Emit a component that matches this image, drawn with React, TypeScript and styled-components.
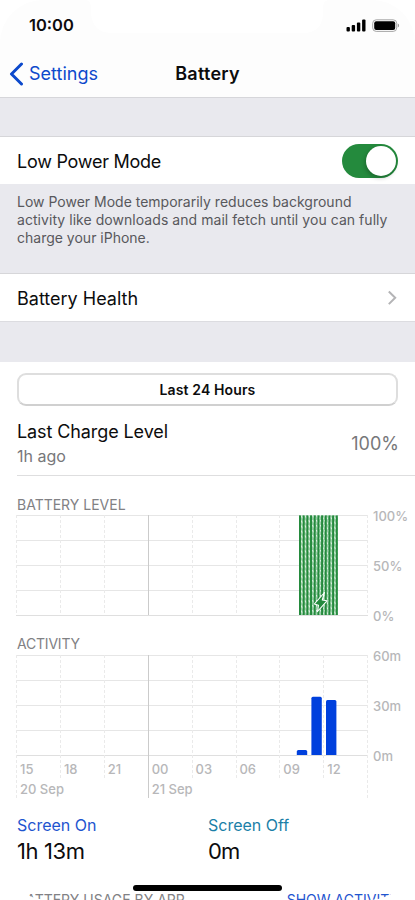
import React from "react";
import styled, { createGlobalStyle } from "styled-components";

const Global = createGlobalStyle`
  html, body { margin: 0; padding: 0; background: #fff; overflow: hidden; }
  * { box-sizing: border-box; }
`;

const Screen = styled.main`
  position: relative;
  width: 415px;
  height: 900px;
  overflow: hidden;
  display: flex;
  flex-direction: column;
  background: #fff;
  color: #0c0c0d;
  font-family: Inter, "Liberation Sans", sans-serif;
`;

const Text = styled.span<{ $size: number; $track?: number; $weight?: number; $color?: string; $line?: number }>`
  display: block;
  white-space: nowrap;
  font-size: ${(p) => p.$size}px;
  letter-spacing: ${(p) => p.$track ?? 0}px;
  font-weight: ${(p) => p.$weight ?? 400};
  color: ${(p) => p.$color ?? "inherit"};
  line-height: ${(p) => p.$line ?? 20}px;
`;

const Header = styled.header`
  flex: none;
  height: 98px;
  background: #fdfdfd;
  border-bottom: 1px solid #d6d6da;
`;

const StatusBar = styled.div`
  height: 50px;
  display: flex;
  justify-content: space-between;
  padding: 15px 15px 0 29px;
`;

const StatusIcons = styled.svg`
  display: block;
  width: 54px;
  height: 16px;
  margin-top: 3px;
`;

const NavBar = styled.nav`
  height: 47px;
  display: grid;
  grid-template-columns: 1fr auto 1fr;
  align-items: center;
`;

const Back = styled.div`
  display: flex;
  align-items: center;
  gap: 5px;
  padding-left: 9px;
  color: #0c49cc;
`;

const Gap = styled.div<{ $height: number }>`
  flex: none;
  height: ${(p) => p.$height}px;
  background: #e9e9ee;
`;

const Row = styled.section<{ $height: number; $bottom?: boolean }>`
  flex: none;
  height: ${(p) => p.$height}px;
  display: flex;
  align-items: center;
  justify-content: space-between;
  padding: 0 17px;
  border-top: 1px solid #d6d6d9;
  border-bottom: ${(p) => (p.$bottom ? "1px solid #dcdce0" : "none")};
`;

const RowLabel = styled(Text)`
  padding-top: 2px;
`;

const Switch = styled.div`
  width: 56px;
  height: 34px;
  border-radius: 17px;
  padding: 2px;
  display: flex;
  justify-content: flex-end;
  background: #248a3d;
`;

const Knob = styled.div`
  width: 30px;
  height: 30px;
  border-radius: 50%;
  background: #fff;
  box-shadow: -1px 2px 4px rgba(0, 0, 0, 0.25);
`;

const Note = styled.div`
  flex: none;
  height: 89px;
  padding: 9px 17px 0;
  background: #e9e9ee;
`;

const Segment = styled.div`
  flex: none;
  height: 33px;
  margin: 11px 17px 0;
  border: 2px solid #dedede;
  border-bottom-color: #d0d0d0;
  border-radius: 9px;
  display: flex;
  align-items: center;
  justify-content: center;
`;

const ChargeRow = styled.section`
  flex: none;
  height: 70px;
  margin-left: 17px;
  padding: 16px 16px 0 0;
  display: flex;
  justify-content: space-between;
  border-bottom: 1px solid #dededf;
`;

const Stack = styled.div<{ $gap: number }>`
  display: flex;
  flex-direction: column;
  gap: ${(p) => p.$gap}px;
`;

const ChartBlock = styled.section<{ $height: number; $top?: number }>`
  flex: none;
  height: ${(p) => p.$height}px;
  padding: ${(p) => p.$top ?? 0}px 0 0 16px;
`;

const ChartTitle = styled.div`
  height: 20px;
  padding-left: 1px;
`;

const ChartBody = styled.div`
  display: grid;
  grid-template-columns: 357px 1fr;
`;

const Plot = styled.svg`
  grid-area: 1 / 1;
  display: block;
  width: 352px;
`;

const Scale = styled.div`
  grid-area: 1 / 2;
  height: 120px;
  margin-top: -9px;
  display: flex;
  flex-direction: column;
  justify-content: space-between;
`;

const TimeAxis = styled.div`
  grid-area: 1 / 1;
  padding: 104px 0 0 4px;
`;

const Hours = styled.div`
  display: grid;
  grid-template-columns: repeat(8, 43.9px);
`;

const Dates = styled.div`
  display: grid;
  grid-template-columns: 131.7px auto;
`;

const AxisText = styled(Text).attrs({ $size: 13, $color: "#b7b7b9", $weight: 500 })``;

const Summary = styled.section`
  flex: none;
  height: 86px;
  padding: 11px 17px 0;
  display: grid;
  grid-template-columns: 191px auto;
`;

const Footer = styled.footer`
  flex: none;
  display: flex;
  justify-content: space-between;
  padding: 0 16px 0 17px;
`;

const Frame = styled.svg`
  position: absolute;
  inset: 0;
  pointer-events: none;
`;

const HomeBar = styled.div`
  position: absolute;
  left: 133px;
  bottom: 9px;
  width: 149px;
  height: 6px;
  border-radius: 3px;
  background: #000;
`;

const STEP = 43.9;

function GridLines({ tail = false }: { tail?: boolean }) {
  return (
    <>
      {[0, 25, 50, 75, 100].map((y) => (
        <path key={y} d={`M0 ${y + 0.5}H352`} stroke={y === 100 ? "#dfdfdf" : "#e6e6e6"} />
      ))}
      {Array.from({ length: 9 }, (_, i) => {
        const x = Math.round(i * STEP) + 0.5;
        const bottom = !tail ? 100 : i === 0 || i === 3 || i === 8 ? 143 : 124;
        return i === 3 ? (
          <path key={i} d={`M${x} 0V${bottom}`} stroke="#cbcbcb" />
        ) : (
          <path key={i} d={`M${x} 0V${bottom}`} stroke="#eaeaea" strokeDasharray="3 2" />
        );
      })}
    </>
  );
}

function AxisLabels({ labels }: { labels: string[] }) {
  return (
    <Scale>
      {labels.map((l) => (
        <AxisText key={l}>{l}</AxisText>
      ))}
    </Scale>
  );
}

const NOTE = [
  { text: "Low Power Mode temporarily reduces background", track: 0 },
  { text: "activity like downloads and mail fetch until you can fully", track: 0.05 },
  { text: "charge your iPhone.", track: 0 },
];

export default function App() {
  return (
    <>
      <Global />
      <Screen>
        <Header>
          <StatusBar>
            <Text $size={16.5} $weight={600}>10:00</Text>
            <StatusIcons viewBox="0 0 54 16">
              <rect x="0.5" y="9" width="3.4" height="4.5" rx="1" />
              <rect x="5.7" y="7" width="3.4" height="6.5" rx="1" />
              <rect x="10.9" y="4.4" width="3.4" height="9.1" rx="1" />
              <rect x="16.1" y="1.5" width="3.4" height="12" rx="1" />
              <rect x="26.7" y="1.8" width="24" height="11.6" rx="3.5" fill="none" stroke="#a6a6a6" />
              <rect x="28.2" y="3.3" width="21" height="8.6" rx="2" />
              <path d="M51.8 5.6v4c1.8-.7 1.8-3.3 0-4z" fill="#999" />
            </StatusIcons>
          </StatusBar>
          <NavBar>
            <Back>
              <svg width="15" height="24" viewBox="0 0 15 24" fill="none" stroke="currentColor" strokeWidth="3" strokeLinecap="round" strokeLinejoin="round">
                <path d="M12.5 2L2.5 12L12.5 22" />
              </svg>
              <Text $size={18}>Settings</Text>
            </Back>
            <Text $size={18} $weight={600} $track={0.25}>Battery</Text>
          </NavBar>
        </Header>
        <Gap $height={38} />
        <Row $height={48}>
          <RowLabel $size={18} $track={-0.25}>Low Power Mode</RowLabel>
          <Switch><Knob /></Switch>
        </Row>
        <Note>
          {NOTE.map((l) => (
            <Text key={l.text} $size={14} $line={17.8} $track={l.track} $color="#58585c">{l.text}</Text>
          ))}
        </Note>
        <Row $height={49} $bottom>
          <RowLabel $size={18}>Battery Health</RowLabel>
          <svg width="12" height="16" viewBox="0 0 12 16" fill="none" stroke="#b4b4b6" strokeWidth="2">
            <path d="M2.8 1.5L9.2 7.8L2.8 14.1" />
          </svg>
        </Row>
        <Gap $height={40} />
        <Segment>
          <Text $size={14} $weight={600} $track={0.12}>Last 24 Hours</Text>
        </Segment>
        <ChargeRow>
          <Stack $gap={4}>
            <Text $size={18} $track={-0.1}>Last Charge Level</Text>
            <Text $size={16} $color="#77777a">1h ago</Text>
          </Stack>
          <Text $size={18} $line={44} $color="#77777a">100%</Text>
        </ChargeRow>
        <ChartBlock $height={159} $top={19}>
          <ChartTitle><Text $size={14} $color="#818184">BATTERY LEVEL</Text></ChartTitle>
          <ChartBody>
            <Plot height="101" viewBox="0 0 352 101">
              <defs>
                <pattern id="hatch" width="4" height="5" patternUnits="userSpaceOnUse">
                  <rect width="4" height="5" fill="#9ad0a8" />
                  <path d="M0 0L4 4" stroke="#dbf0e0" strokeWidth="1.4" />
                </pattern>
              </defs>
              <GridLines />
              <rect x="283" y="0.5" width="39" height="99.5" fill="url(#hatch)" />
              {Array.from({ length: 11 }, (_, i) => (
                <rect key={i} x={283 + i * 3.68} y="0.4" width="2" height="99.6" fill="#248a3d" />
              ))}
              <path d="M308.5 77.5L298.3 89L302.5 90.2L301.5 96.5L311 85.8L306.3 85Z" fill="#248a3d" stroke="#fff" strokeWidth="1.1" strokeLinejoin="round" />
            </Plot>
            <AxisLabels labels={["100%", "50%", "0%"]} />
          </ChartBody>
        </ChartBlock>
        <ChartBlock $height={169}>
          <ChartTitle><Text $size={14} $track={-0.2} $line={18} $color="#818184">ACTIVITY</Text></ChartTitle>
          <ChartBody>
            <Plot height="144" viewBox="0 0 352 144">
              <GridLines tail />
              {[{ x: 280.8, h: 5 }, { x: 295.4, h: 58.2 }, { x: 310, h: 55 }].map(({ x, h }) => (
                <path key={x} d={`M${x} 100v${-(h - 1.5)}q0 -1.5 1.5 -1.5h7.4q1.5 0 1.5 1.5V100z`} fill="#0040dd" />
              ))}
            </Plot>
            <TimeAxis>
              <Hours>
                {["15", "18", "21", "00", "03", "06", "09", "12"].map((h) => (
                  <AxisText key={h}>{h}</AxisText>
                ))}
              </Hours>
              <Dates>
                <AxisText>20 Sep</AxisText>
                <AxisText>21 Sep</AxisText>
              </Dates>
            </TimeAxis>
            <AxisLabels labels={["60m", "30m", "0m"]} />
          </ChartBody>
        </ChartBlock>
        <Summary>
          <Stack $gap={4}>
            <Text $size={16} $color="#1f55cf">Screen On</Text>
            <Text $size={22} $line={24} $track={-0.4}>1h 13m</Text>
          </Stack>
          <Stack $gap={4}>
            <Text $size={16} $color="#1b7fa8">Screen Off</Text>
            <Text $size={22} $line={24} $track={-1}>0m</Text>
          </Stack>
        </Summary>
        <Footer>
          <Text $size={14} $color="#818184">BATTERY USAGE BY APP</Text>
          <Text $size={14} $color="#1f55cf">SHOW ACTIVITY</Text>
        </Footer>
        <Frame width="415" height="900" viewBox="0 0 415 900" fill="#fff">
          <path d="M0 0H43A43 43 0 0 0 0 43ZM415 0H372A43 43 0 0 1 415 43Z" />
          <path d="M86 0H328Q323 1 323 8V14Q322 33 303 33H111Q92 32 91 13V7Q91 1 86 0Z" />
          <path d="M0 851A49 49 0 0 0 49 900H0ZM415 853A47 47 0 0 1 368 900H415Z" />
        </Frame>
        <HomeBar />
      </Screen>
    </>
  );
}
